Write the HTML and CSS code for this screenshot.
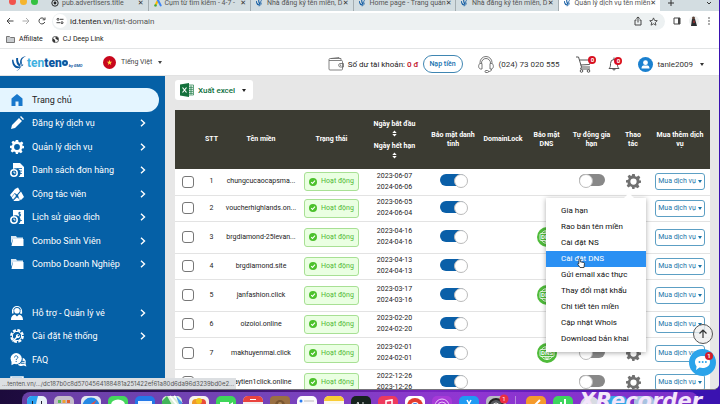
FILE: index.html
```html
<!DOCTYPE html>
<html lang="vi">
<head>
<meta charset="utf-8">
<meta name="viewport" content="width=device-width, initial-scale=1">
<title>Quản lý dịch vụ tên miền</title>
<link rel="stylesheet" href="styles.css">
</head>
<body>
<svg class="sprite" aria-hidden="true">
  <symbol id="swirl" viewBox="0 0 16 16"><path d="M0 4c0 6 3 9 6 9 2 0 3-1 3-2C5 12 2 9 1.500 4zM4.500 2C4 7 6 11 9 11c2 0 3-1 3-2C9 10 6 7 6.500 2zM9 9c-1-4 0-8 6-9-4 2-5 4-4.500 7 0 4-2 8-6 9 3-2 4.500-4 4.500-7z"/></symbol>
  <symbol id="gear" viewBox="0 0 24 24"><path fill-rule="evenodd" d="M10 0h4l.7 3.400 2.500 1 2.900-1.900 2.800 2.800-1.900 2.900 1 2.500L24 10v4l-3.400.7-1 2.500 1.900 2.900-2.800 2.800-2.900-1.900-2.500 1L14 24h-4l-.7-3.400-2.500-1-2.900 1.900-2.800-2.800 1.900-2.900-1-2.500L0 14v-4l3.400-.7 1-2.500-1.900-2.900 2.800-2.800 2.900 1.900 1.100-.7zM12 7a5 5 0 1 0 0 10 5 5 0 0 0 0-10z"/></symbol>
  <symbol id="chev" viewBox="0 0 8 8"><path d="M2 .8 5.500 4 2 7.200" fill="none" stroke="currentColor" stroke-width="1.400"/></symbol>
  <symbol id="folder" viewBox="0 0 14 14"><path d="M1 2h5l1 1.500h6V5H3L1 10z" opacity=".85"/><path d="M3 5h10.500v7H1.500z"/></symbol>
  <symbol id="doc" viewBox="0 0 14 14"><path d="M3 0h7l4 4v10H8.500A4.500 4.500 0 0 0 3 6z"/><path d="M7 5.500h5M8.500 8H12M9 10.500h3" stroke="#0560a6" stroke-width=".8"/><circle cx="4" cy="10" r="3.200" fill="none" stroke="currentColor" stroke-width="1.500"/><path d="M4 8.500V10h1.500" fill="none" stroke="currentColor"/></symbol>
  <symbol id="bill" viewBox="0 0 14 14"><path d="M3 0h11v14H8.500A4.500 4.500 0 0 0 3 6z"/><path d="M10.500 2.500H8.800v1.700h1.700v1.700H8.800M9.600 1.800v5M8.500 10.500H12" fill="none" stroke="#0560a6" stroke-width=".8"/><circle cx="4" cy="10" r="3.200" fill="none" stroke="currentColor" stroke-width="1.500"/><path d="M4 8.500V10h1.500" fill="none" stroke="currentColor"/></symbol>
  <symbol id="tick" viewBox="0 0 10 10"><circle cx="5" cy="5" r="5" fill="#4cc12c"/><path d="M2.700 5.100 4.400 6.800 7.500 3.400" fill="none" stroke="#fff" stroke-width="1.300"/></symbol>
  <symbol id="dns" viewBox="0 0 20 20"><circle cx="10" cy="10" r="10" fill="#4fbb3a"/><g fill="none" stroke="#fff" stroke-width=".8"><path d="M4.500 6.500a6.500 6.500 0 0 1 11 0M4.500 13.500a6.500 6.500 0 0 0 11 0M10 3.500v3M10 13.500v3M8 6.500C8.300 5 9 4 10 3.500 11 4 11.700 5 12 6.500M8 13.500c.3 1.500 1 2.500 2 3 1-.5 1.700-1.500 2-3"/><rect x="3" y="6.500" width="14" height="7" rx="1"/></g><text x="10" y="12.200" text-anchor="middle" font-family="Roboto, sans-serif" font-weight="700" font-size="6" fill="#fff">DNS</text></symbol>
</svg>

<div class="window">
  <header class="tabstrip">
    <div class="lights"><i class="red"></i><i class="amber"></i><i class="green"></i></div>
    <div class="tabs">
      <div class="tab"><svg class="fav" viewBox="0 0 10 10"><circle cx="5" cy="5" r="4" fill="none" stroke="#222" stroke-width="1.200"/><circle cx="5" cy="5" r="1.800" fill="#222"/></svg><span>pub.advertisers.title</span><b>✕</b></div>
      <div class="tab"><svg class="fav" viewBox="0 0 10 10"><path d="M5 1.500 1.800 8" stroke="#fbbc04" stroke-width="2.600" stroke-linecap="round"/><path d="M5 1.500 8.300 8" stroke="#4285f4" stroke-width="2.600" stroke-linecap="round"/><circle cx="1.900" cy="8" r="1.500" fill="#34a853"/></svg><span>Cụm từ tìm kiếm - 4-7 -</span><b>✕</b></div>
      <div class="tab"><svg class="fav brand"><use href="#swirl"/></svg><span>Nhà đăng ký tên miền, D</span><b>✕</b></div>
      <div class="tab"><svg class="fav brand"><use href="#swirl"/></svg><span>Home page - Trang quản</span><b>✕</b></div>
      <div class="tab"><svg class="fav brand"><use href="#swirl"/></svg><span>Nhà đăng ký tên miền, D</span><b>✕</b></div>
      <div class="tab current"><svg class="fav brand"><use href="#swirl"/></svg><span>Quản lý dịch vụ tên miền</span><b>✕</b></div>
    </div>
    <div class="tabtools">
      <svg width="8" height="8" viewBox="0 0 8 8"><path d="M4 1v6M1 4h6" stroke="#333"/></svg>
      <svg width="8" height="8" viewBox="0 0 8 8"><path d="m2 3 2 2 2-2" fill="none" stroke="#333"/></svg>
    </div>
  </header>

  <div class="toolbar">
    <svg width="8" height="8" viewBox="0 0 8 8" fill="none" stroke="#444"><path d="M7.500 4H1M4 1 1 4l3 3"/></svg>
    <svg width="8" height="8" viewBox="0 0 8 8" fill="none" stroke="#aaa"><path d="M.5 4H7M4 1l3 3-3 3"/></svg>
    <svg width="8" height="8" viewBox="0 0 8 8" fill="none" stroke="#444"><path d="M6.800 5A3 3 0 1 1 6.300 2M7 .5v2.300H4.700"/></svg>
    <div class="address">
      <span class="site"><svg width="8" height="8" viewBox="0 0 8 8" fill="none" stroke="#444"><circle cx="2" cy="2.300" r="1"/><path d="M4 2.300h3.500M.5 5.700H4"/><circle cx="6" cy="5.700" r="1"/></svg></span>
      <span class="url">id.tenten.vn<em>/list-domain</em></span>
      <svg width="8" height="10" viewBox="0 0 8 10" fill="none" stroke="#444"><path d="M2.500 4H1v5h6V4H5.500M4 6.500V1M2.300 2.500 4 1l1.700 1.500"/></svg>
      <svg width="9" height="9" viewBox="0 0 10 10" fill="none" stroke="#444"><path d="m5 1 1.200 2.800 3 .3L7 6.100l.7 3L5 7.500 2.300 9.100l.7-3L.8 4.100l3-.3z"/></svg>
    </div>
    <svg width="8" height="8" viewBox="0 0 8 8"><path d="M1 1h6v6H1z" fill="none" stroke="#444"/><path d="M5 1h2v6H5z" fill="#444"/></svg>
    <svg width="10" height="10" viewBox="0 0 10 10"><circle cx="5" cy="5" r="5" fill="#eef0f0"/><path d="M3 3h3l2 7H2z" fill="#292b2e"/><circle cx="4.500" cy="2" r="1.500" fill="#5c4238"/><path d="M4.500 4.500h1V7h-1z" fill="#d33"/></svg>
    <svg width="4" height="8" viewBox="0 0 4 8" fill="#444"><circle cx="2" cy="1" r=".8"/><circle cx="2" cy="4" r=".8"/><circle cx="2" cy="7" r=".8"/></svg>
  </div>

  <nav class="bookmarks">
    <a href="#"><svg width="9" height="7" viewBox="0 0 9 7"><path d="M.5.5h3l1 1h4v5h-8z" fill="#c9cccf" stroke="#777"/></svg>Affiliate</a>
    <a href="#"><svg width="7" height="7" viewBox="0 0 8 8"><circle cx="4" cy="4" r="3.600" fill="#fff" stroke="#333" stroke-width=".8"/><path d="M1 2.500 3 4l1 2-1 1.500C1 7 0 5 1 2.500zM4 .5 7 2l.5 3-2-1-1.500-1z" fill="#333"/></svg>CJ Deep Link</a>
  </nav>

  <div class="sitebar">
    <a class="logo" href="#" aria-label="tenten"><svg class="brand" width="15" height="15"><use href="#swirl"/></svg><span class="word">ten<b>ten</b></span><i class="vn"></i><small>by GMO</small></a>
    <div class="lang"><svg width="13" height="13" viewBox="0 0 13 13"><circle cx="6.500" cy="6.500" r="6.500" fill="#c8071c"/><path d="m6.500 3.800.7 1.900h2L7.600 6.900l.6 2-1.700-1.200-1.700 1.200.6-2-1.600-1.200h2z" fill="#ffde45"/></svg><span>Tiếng Việt</span><i class="caret"></i></div>
    <div class="balance">
      <svg width="16" height="14" viewBox="0 0 16 14" fill="none" stroke="#666" stroke-width=".8"><path d="M1 3.500h12.500a1 1 0 0 1 1 1V12a1 1 0 0 1-1 1H2a1 1 0 0 1-1-1V2.500C1 1.500 2 1.500 2 1.500h11v2M3 1.500l8-1 1 1M15.500 6.500H12a1.800 1.800 0 0 0 0 3.500h3.500z"/><circle cx="12.500" cy="8.200" r=".4"/></svg>
      <span>Số dư tài khoản: <strong>0 đ</strong></span>
      <button type="button" class="topup">Nạp tiền</button>
    </div>
    <div class="phone">
      <svg width="16" height="17" viewBox="0 0 16 17" fill="none" stroke="#666" stroke-width=".9"><path d="M2 8V6.500a6 6 0 0 1 12 0V8M3.500 7a4.500 4.500 0 0 1 9 0M2.500 7.500C0 8 0 12.500 2.500 13h1.500V7.500zM13.500 7.500C16 8 16 12.500 13.500 13H12V7.500zM13.500 13c0 2-1 2.500-3 2.500"/><rect x="7" y="14.500" width="3.500" height="2" rx="1"/></svg>
      <span>(024) 73 020 555</span>
    </div>
    <a class="badged" href="#" aria-label="Giỏ hàng"><svg width="16" height="17" viewBox="0 0 16 17" fill="none" stroke="#555"><path d="M0 1h2.500l3 10H14M3.500 4H15l-1.500 4.500-9 .5M5.500 11l-1 2H14"/><circle cx="5.500" cy="15" r="1.300"/><circle cx="12.500" cy="15" r="1.300"/></svg><b>0</b></a>
    <a class="badged bell" href="#" aria-label="Thông báo"><svg width="12" height="14" viewBox="0 0 12 14" fill="none" stroke="#555"><path d="M1 11.500h10C9.500 10 9.500 9 9.500 6.500a3.500 4 0 0 0-7 0C2.500 9 2.500 10 1 11.500zM6 2.500V.5M4.700 11.700a1.300 1.300 0 0 0 2.600 0"/></svg><b>0</b></a>
    <div class="user"><svg width="15" height="15" viewBox="0 0 15 15"><circle cx="7.500" cy="7.500" r="7.500" fill="#1a80cf"/><circle cx="7.500" cy="5.700" r="2.400" fill="#fff"/><path d="M3.500 11.500c0-3.500 2-3 4-3s4-.5 4 3z" fill="#fff"/></svg><span>tanle2009</span><i class="caret"></i></div>
  </div>

  <div class="body">
    <nav class="side">
      <ul class="main-links">
        <li class="on"><a href="#"><svg viewBox="0 0 14 14" fill="#1878cc"><path d="M7 1 1.500 5.500V13h4V8.500h3V13h4V5.500z"/></svg>Trang chủ</a></li>
        <li><a href="#"><svg viewBox="0 0 14 14"><path d="m2 9 7-7 3 3-7 7-4 1zM10 1l1-1 3 3-1 1z"/></svg>Đăng ký dịch vụ<svg class="go"><use href="#chev"/></svg></a></li>
        <li><a href="#"><svg><use href="#gear"/></svg>Quản lý dịch vụ<svg class="go"><use href="#chev"/></svg></a></li>
        <li><a href="#"><svg><use href="#doc"/></svg>Danh sách đơn hàng<svg class="go"><use href="#chev"/></svg></a></li>
        <li><a href="#"><svg viewBox="0 0 14 14"><path d="m0 8 5-6 3-1.500L10 4 7 7.500 4.500 6 6 9l-3 3.500z"/><path d="m8 8 3-3.500L14 10l-3 3-2-1.500zM3.500 13l3-3 4 3-2 1H4z"/><path d="m1 11 4-5M4 13l4-4" stroke="#0560a6" stroke-width=".6"/></svg>Cộng tác viên<svg class="go"><use href="#chev"/></svg></a></li>
        <li><a href="#"><svg><use href="#bill"/></svg>Lịch sử giao dịch<svg class="go"><use href="#chev"/></svg></a></li>
        <li><a href="#"><svg><use href="#folder"/></svg>Combo Sinh Viên<svg class="go"><use href="#chev"/></svg></a></li>
        <li><a href="#"><svg><use href="#folder"/></svg>Combo Doanh Nghiệp<svg class="go"><use href="#chev"/></svg></a></li>
      </ul>
      <ul class="help-links">
        <li><a href="#"><svg viewBox="0 0 14 14"><circle cx="7" cy="4.800" r="2.800"/><path d="M2.500 5a4.500 4.500 0 0 1 9 0v2H10" fill="none" stroke="currentColor" stroke-width="1.200"/><path d="M1 14c0-4 2-5 4-5.500l2 2 2-2c2 .5 4 1.500 4 5.500zM2 4h1.500v3.500H2zM10.500 4H12v3.500h-1.500z"/></svg>Hỗ trợ - Quản lý vé<svg class="go"><use href="#chev"/></svg></a></li>
        <li><a href="#"><svg viewBox="0 0 14 14"><circle cx="7" cy="7" r="5.800" fill="none" stroke="currentColor" stroke-width="2.200" stroke-dasharray="3 1.500"/><circle cx="7" cy="7" r="4.600" fill="none" stroke="currentColor"/><path d="m2 12 4-4a2.400 2.400 0 0 1 3-3L7.500 6.500l1 1L10 6a2.400 2.400 0 0 1-3 3l-4 4z"/></svg>Cài đặt hệ thống<svg class="go"><use href="#chev"/></svg></a></li>
        <li><a href="#"><svg class="faq" viewBox="0 0 17 15"><circle cx="6" cy="6" r="6"/><path d="M1 9v4l4-2zM13 5c3 1 4 4 3 6.500l1 3-3-1c-3 1-5.500 0-6.500-1.500 4 0 6-3.500 5.500-7z"/><path d="M4.200 4.800c0-2.500 3.600-2.300 3.600 0C7.800 6 6 6 6 7.500M6 8.500v1.200M11 11h4M12 9h3" fill="none" stroke="#0560a6"/></svg>FAQ</a></li>
        <li><a href="#"><svg viewBox="0 0 14 14"><path d="M1 1h12v10H1z" fill="none" stroke="currentColor" stroke-width="1.500"/></svg></a></li>
      </ul>
    </nav>

    <main class="content">
      <button type="button" class="export"><svg width="14" height="14" viewBox="0 0 14 14"><path d="M8 2h5.500v10H8z" fill="#fff" stroke="#1d7b45" stroke-width=".7"/><path d="M9 4.300h4M9 6.300h4M9 8.300h4M9 10.300h4M11 2.500v9" stroke="#1d7b45" stroke-width=".8"/><path d="m0 1.500 9-1.500v14l-9-1.500z" fill="#14713c"/><path d="m2.500 4.500 4 5M6.500 4.500l-4 5" stroke="#fff" stroke-width="1.200"/></svg>Xuất excel<i class="caret"></i></button>

      <table class="domains">
        <colgroup><col class="w-check"><col class="w-stt"><col class="w-name"><col class="w-state"><col class="w-dates"><col class="w-id"><col class="w-lock"><col class="w-dns"><col class="w-renew"><col class="w-act"><col class="w-buy"></colgroup>
        <thead><tr><th></th><th>STT</th><th>Tên miền</th><th>Trạng thái</th><th class="sort"><span>Ngày bắt đầu</span><svg width="5" height="7" viewBox="0 0 5 7"><path d="M.3 3 2.500.5 4.700 3zM.3 4 2.500 6.500 4.700 4z"/></svg><span>Ngày hết hạn</span><svg width="5" height="7" viewBox="0 0 5 7"><path d="M.3 3 2.500.5 4.700 3zM.3 4 2.500 6.500 4.700 4z"/></svg></th><th>Bảo mật danh tính</th><th>DomainLock</th><th>Bảo mật DNS</th><th>Tự động gia hạn</th><th>Thao tác</th><th>Mua thêm dịch vụ</th></tr></thead>
        <tbody>
          <tr><td><input type="checkbox" class="pick" aria-label="Chọn 1"></td><td>1</td><td>chungcucaocapsma...</td><td><span class="state"><svg><use href="#tick"/></svg>Hoạt động</span></td><td>2023-06-07<br>2024-06-06</td><td><input type="checkbox" class="switch" aria-label="Bảo mật 1" checked></td><td></td><td></td><td><input type="checkbox" class="switch" aria-label="Gia hạn 1"></td><td class="act"><button type="button" class="cog" aria-label="Thao tác 1"><svg><use href="#gear"/></svg></button>
            <ul class="menu"><li><a href="#">Gia hạn</a></li><li><a href="#">Rao bán tên miền</a></li><li><a href="#">Cài đặt NS</a></li><li class="hot"><a href="#">Cài đặt DNS</a><svg class="hand" width="8" height="10" viewBox="0 0 8 10"><path d="M2 1c.6-.6 1.300-.2 1.300.5v2.300l3 .6c1 .2 1.200.6 1.100 1.500L7 9.500H3L.8 6.300C.5 5.700 1.200 5.200 1.800 5.700z" fill="#fff" stroke="#222" stroke-width=".8"/></svg></li><li><a href="#">Gửi email xác thực</a></li><li><a href="#">Thay đổi mật khẩu</a></li><li><a href="#">Chi tiết tên miền</a></li><li><a href="#">Cập nhật Whois</a></li><li><a href="#">Download bản khai</a></li></ul></td><td><button type="button" class="buy">Mua dịch vụ<i class="caret"></i></button></td></tr>
          <tr><td><input type="checkbox" class="pick" aria-label="Chọn 2"></td><td>2</td><td>voucherhighlands.on...</td><td><span class="state"><svg><use href="#tick"/></svg>Hoạt động</span></td><td>2023-06-05<br>2024-06-04</td><td><input type="checkbox" class="switch" aria-label="Bảo mật 2" checked></td><td></td><td></td><td><input type="checkbox" class="switch" aria-label="Gia hạn 2"></td><td><button type="button" class="cog" aria-label="Thao tác 2"><svg><use href="#gear"/></svg></button></td><td><button type="button" class="buy">Mua dịch vụ<i class="caret"></i></button></td></tr>
          <tr class="tall"><td><input type="checkbox" class="pick" aria-label="Chọn 3"></td><td>3</td><td>brgdiamond-25levan...</td><td><span class="state"><svg><use href="#tick"/></svg>Hoạt động</span></td><td>2023-04-16<br>2024-04-16</td><td><input type="checkbox" class="switch" aria-label="Bảo mật 3" checked></td><td></td><td><svg class="dns"><use href="#dns"/></svg></td><td><input type="checkbox" class="switch" aria-label="Gia hạn 3"></td><td><button type="button" class="cog" aria-label="Thao tác 3"><svg><use href="#gear"/></svg></button></td><td><button type="button" class="buy">Mua dịch vụ<i class="caret"></i></button></td></tr>
          <tr><td><input type="checkbox" class="pick" aria-label="Chọn 4"></td><td>4</td><td>brgdiamond.site</td><td><span class="state"><svg><use href="#tick"/></svg>Hoạt động</span></td><td>2023-04-13<br>2024-04-13</td><td><input type="checkbox" class="switch" aria-label="Bảo mật 4" checked></td><td></td><td></td><td><input type="checkbox" class="switch" aria-label="Gia hạn 4"></td><td><button type="button" class="cog" aria-label="Thao tác 4"><svg><use href="#gear"/></svg></button></td><td><button type="button" class="buy">Mua dịch vụ<i class="caret"></i></button></td></tr>
          <tr class="tall"><td><input type="checkbox" class="pick" aria-label="Chọn 5"></td><td>5</td><td>janfashion.click</td><td><span class="state"><svg><use href="#tick"/></svg>Hoạt động</span></td><td>2023-03-17<br>2024-03-16</td><td><input type="checkbox" class="switch" aria-label="Bảo mật 5" checked></td><td></td><td><svg class="dns"><use href="#dns"/></svg></td><td><input type="checkbox" class="switch" aria-label="Gia hạn 5"></td><td><button type="button" class="cog" aria-label="Thao tác 5"><svg><use href="#gear"/></svg></button></td><td><button type="button" class="buy">Mua dịch vụ<i class="caret"></i></button></td></tr>
          <tr><td><input type="checkbox" class="pick" aria-label="Chọn 6"></td><td>6</td><td>oizoioi.online</td><td><span class="state"><svg><use href="#tick"/></svg>Hoạt động</span></td><td>2023-02-20<br>2024-02-20</td><td><input type="checkbox" class="switch" aria-label="Bảo mật 6" checked></td><td></td><td></td><td><input type="checkbox" class="switch" aria-label="Gia hạn 6"></td><td><button type="button" class="cog" aria-label="Thao tác 6"><svg><use href="#gear"/></svg></button></td><td><button type="button" class="buy">Mua dịch vụ<i class="caret"></i></button></td></tr>
          <tr class="tall"><td><input type="checkbox" class="pick" aria-label="Chọn 7"></td><td>7</td><td>makhuyenmai.click</td><td><span class="state"><svg><use href="#tick"/></svg>Hoạt động</span></td><td>2023-02-01<br>2024-02-01</td><td><input type="checkbox" class="switch" aria-label="Bảo mật 7" checked></td><td></td><td><svg class="dns"><use href="#dns"/></svg></td><td><input type="checkbox" class="switch" aria-label="Gia hạn 7"></td><td><button type="button" class="cog" aria-label="Thao tác 7"><svg><use href="#gear"/></svg></button></td><td><button type="button" class="buy">Mua dịch vụ<i class="caret"></i></button></td></tr>
          <tr><td><input type="checkbox" class="pick" aria-label="Chọn 8"></td><td></td><td>vaytien1click.online</td><td><span class="state"><svg><use href="#tick"/></svg>Hoạt động</span></td><td>2022-12-26<br>2023-12-26</td><td><input type="checkbox" class="switch" aria-label="Bảo mật 8" checked></td><td></td><td></td><td><input type="checkbox" class="switch" aria-label="Gia hạn 8"></td><td><button type="button" class="cog" aria-label="Thao tác 8"><svg><use href="#gear"/></svg></button></td><td><button type="button" class="buy">Mua dịch vụ<i class="caret"></i></button></td></tr>
        </tbody>
      </table>
    </main>
  </div>

  <div class="floaters">
    <button type="button" class="up" aria-label="Lên đầu trang"><svg width="10" height="10" viewBox="0 0 10 10" fill="none" stroke="#333" stroke-width="1.200"><path d="M5 9V1M1.500 4.500 5 1l3.500 3.500"/></svg></button>
    <button type="button" class="chat" aria-label="Chat"><svg width="17" height="16" viewBox="0 0 17 16"><path d="M8.500 1C13 1 16 3.500 16 7s-3 6-7.500 6c-1 0-2-.1-3-.4L2 15l.6-3.600C1.500 10 1 8.500 1 7c0-3.500 3-6 7.500-6z" fill="#fff"/><g fill="#2aa3ea"><circle cx="5.500" cy="7" r="1"/><circle cx="8.700" cy="7" r="1"/><circle cx="11.900" cy="7" r="1"/></g></svg><b>1</b></button>
  </div>
  <div class="status">...tenten.vn/.../dc187b0c8d5704564188481a251422ef61a80d6da96d3239bd0e2...</div>
</div>

<footer class="desktop">
  <div class="dock">
    <svg viewBox="0 0 20 20"><rect width="20" height="20" rx="5" fill="#e9f1f8"/><path d="M5 0h6c-1 4-2 7-2 10H0V5a5 5 0 0 1 5-5z" fill="#2aa0f0"/><path d="M5.500 5v3M14.500 5v3" stroke="#223"/></svg>
    <svg viewBox="0 0 20 20"><rect width="20" height="20" rx="5" fill="#c4bccb"/><path d="M4 4h3v3H4z" fill="#58b957"/><path d="M8.500 4h3v3h-3z" fill="#f0a030"/><path d="M13 4h3v3h-3z" fill="#e06030"/></svg>
    <svg viewBox="0 0 20 20"><rect width="20" height="20" rx="5" fill="#e3e8ef"/><circle cx="10" cy="10" r="8.500" fill="#2588e4"/><path d="m15.500 4-4 7-3-2z" fill="#e94b40"/></svg>
    <svg viewBox="0 0 20 20"><rect width="20" height="20" rx="5" fill="#45d85c"/><ellipse cx="10" cy="9" rx="7" ry="5.500" fill="#fff"/></svg>
    <svg viewBox="0 0 20 20"><rect width="20" height="20" rx="5" fill="#2479e8"/><path d="M3 5h14v10H3z" fill="#f3f8ff"/></svg>
    <svg viewBox="0 0 20 20"><rect width="20" height="20" rx="5" fill="#d9eed5"/><path d="M0 5 5 0l5 9v11H0z" fill="#42b55a"/><path d="m8 0 7 9M12 0l8 7" stroke="#fff" stroke-width="2"/><path d="m14 0 6 6v10z" fill="#4a9ee9"/></svg>
    <svg viewBox="0 0 20 20"><rect width="20" height="20" rx="5" fill="#f6f3ee"/><circle cx="7" cy="7" r="4" fill="#f09a28"/><circle cx="13" cy="7" r="4" fill="#e84c3c"/><circle cx="10" cy="5" r="3" fill="#f2c41e"/></svg>
    <svg viewBox="0 0 20 20"><rect width="20" height="20" rx="5" fill="#3fd65a"/><path d="M4 6h9v8H4zM14 8l3-2v8l-3-2z" fill="#fff"/></svg>
    <svg viewBox="0 0 20 20"><rect width="20" height="20" rx="5" fill="#f2eeee"/><path d="M0 6V5a5 5 0 0 1 5-5h10a5 5 0 0 1 5 5v1z" fill="#e9433e"/><path d="M7 3.500h6" stroke="#fff"/></svg>
    <svg viewBox="0 0 20 20"><rect width="20" height="20" rx="4" fill="#9a7042"/><circle cx="10" cy="9" r="5" fill="#7a5630"/><circle cx="10" cy="8" r="2" fill="#b08a58"/></svg>
    <svg viewBox="0 0 20 20"><rect width="20" height="20" rx="5" fill="#fbfbfd"/><circle cx="4" cy="5" r="1.500" fill="#2a7df0"/><path d="M7 5h10" stroke="#bbb"/></svg>
    <svg viewBox="0 0 20 20"><rect width="20" height="20" rx="5" fill="#fbf8ea"/><path d="M0 5a5 5 0 0 1 5-5h10a5 5 0 0 1 5 5z" fill="#f9cc35"/></svg>
    <svg viewBox="0 0 20 20"><rect width="20" height="20" rx="5" fill="#17241f"/><path d="m6 8 1-2 1 3M12 6v3" stroke="#ddd" fill="none"/></svg>
    <svg viewBox="0 0 20 20"><rect width="20" height="20" rx="5" fill="#ee3a5d"/><path d="M8 12V5l6-1v7" stroke="#fff" fill="none" stroke-width="1.500"/></svg>
    <svg viewBox="0 0 20 20"><rect width="20" height="20" rx="5" fill="#fff"/><circle cx="10" cy="10" r="8" fill="#e23c30"/><circle cx="10" cy="10" r="4" fill="#fff"/><circle cx="10" cy="10" r="3" fill="#3a7de8"/></svg>
    <svg viewBox="0 0 20 20"><rect width="20" height="20" rx="5" fill="#a83ad8"/><g fill="none" stroke="#ecc9fa"><circle cx="10" cy="10" r="7"/><circle cx="10" cy="10" r="4"/></g></svg>
    <svg viewBox="0 0 20 20"><rect width="20" height="20" rx="5" fill="#1f9bf3"/><path d="m8 4 5 9M12 4l-5 9" stroke="#fff" stroke-width="1.500"/></svg>
    <svg class="prefs" viewBox="0 0 20 20"><rect width="20" height="20" rx="5" fill="#b9bbc0"/><circle cx="10" cy="10" r="7" fill="#55575c" stroke="#222" stroke-width="2"/><circle cx="10" cy="10" r="3" fill="none" stroke="#ddd"/><circle cx="18" cy="3" r="4.500" fill="#ec2f42"/><text x="18" y="5.200" text-anchor="middle" font-family="Roboto, sans-serif" font-size="6" fill="#fff">1</text></svg>
    <hr>
    <svg viewBox="0 0 20 20"><rect width="20" height="20" rx="5" fill="#f59a2c"/><path d="m7 11 7-7" stroke="#fff" stroke-width="2"/></svg>
    <svg viewBox="0 0 20 20"><rect width="20" height="20" rx="5" fill="#3ed65e"/><path d="M8 12V6M12 12V3" stroke="#fff" stroke-width="2"/></svg>
    <svg viewBox="0 0 20 20"><circle cx="10" cy="10" r="10" fill="#d8dbe2"/></svg>
    <svg viewBox="0 0 20 20"><rect width="20" height="20" rx="5" fill="#36a6e4"/></svg>
    <svg viewBox="0 0 20 20"><rect width="20" height="20" rx="5" fill="#a9c3e0"/></svg>
  </div>
  <span class="mark">XRecorder</span>
</footer>
</body>
</html>
```
FILE: styles.css
```css
* { box-sizing: border-box; }
body {
  margin: 0;
  height: 100vh;
  display: flex;
  flex-direction: column;
  overflow: hidden;
  position: relative;
  background: linear-gradient(90deg, #1c0b3c, #32125e 30%, #7c24c4 60%, #3a12b0 95%);
  font-family: Roboto, "Noto Sans", sans-serif;
  font-size: 8px;
  color: #222;
}
a { color: inherit; text-decoration: none; }
button { font: inherit; padding: 0; cursor: pointer; }
ul { list-style: none; margin: 0; padding: 0; }
svg { display: block; flex: none; }
.sprite { position: absolute; width: 0; height: 0; }
.brand { fill: #0b57a0; }
.caret { border: 2px solid transparent; border-top: 3px solid currentColor; border-bottom: 0; }

.window {
  flex: 1;
  min-height: 0;
  margin-right: 1px;
  display: flex;
  flex-direction: column;
  position: relative;
  overflow: hidden;
  background: #fff;
  border-bottom: 1px solid #77747c;
  border-radius: 0 0 6px 0;
}

.tabstrip { display: flex; align-items: flex-end; height: 11px; overflow: hidden; background: #d3dde1; }
.lights { display: flex; align-items: center; gap: 4px; width: 46px; height: 17px; padding: 0 0 3px 9px; }
.lights i { width: 7px; height: 7px; border-radius: 50%; }
.red { background: #f2544d; }
.amber { background: #f5b52e; }
.green { background: #35c141; }
.tabs { flex: 1; display: flex; min-width: 0; }
.tab { flex: 1 1 0; min-width: 0; display: flex; align-items: center; height: 17px; padding: 0 4px 0 5px; color: #555; border-right: 1px solid #a5aeb2; }
.tab.current { background: #fff; border-radius: 4px 4px 0 0; border: 0; }
.tab span { flex: 1; white-space: nowrap; margin-left: 3px; font-size: 7px; }
.tab b { font: 7px "DejaVu Sans", sans-serif; color: #333; }
.fav { width: 8px; height: 8px; }
.tabtools { display: flex; align-items: center; justify-content: space-between; width: 59px; height: 17px; padding: 0 6px 0 7px; }

.toolbar { display: flex; align-items: center; gap: 8px; height: 20px; padding: 0 8px 0 6px; }
.toolbar > svg + .address { margin-left: -2px; }
.address { flex: 1; display: flex; align-items: center; gap: 7px; height: 17px; padding-right: 7px; border-radius: 9px; background: #edf1f2; }
.site { display: grid; place-items: center; width: 14px; height: 14px; margin: 0 -5px 0 1px; border-radius: 50%; background: #fff; }
.url { flex: 1; padding-left: 1px; font-size: 8px; }
.url em { font-style: normal; color: #555; }
.bookmarks { display: flex; align-items: center; gap: 9px; height: 18px; padding: 0 6px 1px; border-bottom: 1px solid #e3e5e6; font-size: 7px; }
.bookmarks a { display: flex; align-items: center; gap: 4px; }

.sitebar { display: flex; align-items: center; height: 27px; padding: 4px 15px 0 12px; border-bottom: 1px solid #e2e2e2; }
.logo { display: flex; align-items: center; height: 20px; width: 91px; padding-bottom: 2px; }
.word { color: #41b1e1; font-weight: 700; font-size: 12px; line-height: 12px; }
.word b { color: #0b57a0; }
.vn { flex: none; width: 6px; height: 6px; border: 2px solid #0b57a0; border-radius: 50%; background: #9fd0ef; }
.logo small { margin: 4px 0 0 1px; color: #0b57a0; font-size: 4px; font-weight: 700; font-style: italic; white-space: nowrap; }
.lang { display: flex; align-items: center; height: 20px; padding-bottom: 4px; color: #444; white-space: nowrap; }
.lang span { margin: 0 6px 0 5px; font-size: 7px; }
.balance { display: flex; align-items: center; gap: 4px; margin-left: auto; font-size: 8px; white-space: nowrap; }
.balance strong { color: #c00d1e; font-weight: 500; }
.topup { width: 40px; height: 18px; border: 1px solid #3f86b2; border-radius: 9px; background: #fff; color: #1470ae; font-size: 7px; font-weight: 500; }
.phone { display: flex; align-items: center; gap: 5px; margin-left: 15px; color: #333; white-space: nowrap; }
.badged { position: relative; margin-left: 17px; }
.badged b { position: absolute; left: 12px; top: 0; width: 8px; height: 8px; border-radius: 50%; background: #d80f20; color: #fff; font-size: 6px; line-height: 8px; text-align: center; }
.bell { margin-left: 16px; }
.bell b { left: 6px; }
.user { display: flex; align-items: center; margin-left: 18px; color: #333; }
.user span { margin: 0 7px 0 4px; }

.body { flex: 1; min-height: 0; display: flex; background: #e7e7e7; overflow: hidden; }
.side { flex: none; width: 165px; padding-top: 12px; background: #0560a6; color: #fff; font-size: 9px; }
.main-links, .help-links { display: grid; grid-auto-rows: 1fr; }
.main-links { height: 188px; }
.help-links { height: 94px; margin-top: 25px; }
.side li { display: flex; }
.side a { flex: 1; display: flex; align-items: center; padding: 0 18px 0 10px; gap: 8px; fill: #fff; white-space: nowrap; }
.side svg { width: 14px; height: 14px; overflow: visible; }
.side .go { width: 8px; height: 8px; margin-left: auto; }
.side .faq { width: 17px; margin-right: -3px; }
.side .on { margin-right: 6px; border-radius: 0 12px 12px 0; background: #e4f5ff; color: #222; }

.content { flex: 1; min-width: 0; padding: 4px 9px 0 10px; }
.export { display: flex; align-items: center; gap: 4px; height: 20px; padding: 0 7px 0 5px; border: 0; border-radius: 3px; background: #fff; color: #0c6e3c; font-size: 8px; font-weight: 500; }
.export .caret { margin-left: 3px; color: #222; }
.domains { width: 100%; margin-top: 10px; border-collapse: collapse; table-layout: fixed; background: #fff; font-size: 7px; color: #222; text-align: center; }
.w-check { width: 26px; }
.w-stt { width: 21px; }
.w-name { width: 78px; }
.w-state { width: 63px; }
.w-dates { width: 63px; }
.w-id { width: 54px; }
.w-lock { width: 46px; }
.w-dns { width: 41px; }
.w-renew { width: 49px; }
.w-act { width: 34px; }
th { height: 59px; padding: 0 5px; background: #3b3b32; color: #fff; font-size: 7px; font-weight: 700; line-height: 9px; }
th:nth-child(2), th:nth-child(7) { padding: 0; }
.sort span { display: block; }
.sort svg { margin: 1px auto 5px; fill: #fff; }
.sort svg:last-child { margin-bottom: 0; }
td { height: 26px; padding: 0; border-bottom: 1px solid #e3e3e3; line-height: 11px; white-space: nowrap; }
.tall td { height: 32px; }
.pick { appearance: none; display: block; width: 12px; height: 12px; margin: 0 auto; border: 1px solid #777; border-radius: 3px; background: #fff; }
.state { display: flex; align-items: center; justify-content: center; gap: 4px; width: 55px; height: 19px; margin: 0 auto; border: 1px solid #a8e094; border-radius: 3px; background: #eaffe2; color: #4fb834; font-size: 7px; }
.state svg { width: 8px; height: 8px; }
.switch { appearance: none; display: block; width: 26px; height: 12px; margin: 0 auto 3px; border-radius: 6px; background: #888; }
.switch::before { content: ""; display: block; width: 12px; height: 12px; border: 1px solid #bbb; border-radius: 50%; background: #fff; }
.switch:checked { background: #0a5fa8; }
.switch:checked::before { margin-left: 14px; }
.dns { width: 20px; height: 20px; margin: 0 auto; }
.act { position: relative; }
.cog { display: block; margin: 0 auto; border: 0; background: none; fill: #707070; }
.cog svg { width: 15px; height: 15px; }
.buy { display: flex; align-items: center; justify-content: center; gap: 2px; width: 50px; height: 17px; margin: 0 auto; border: 1px solid #5c9fc4; border-radius: 3px; background: #fff; color: #1a74a8; font-size: 7px; }

.menu { position: absolute; z-index: 2; top: 29px; right: 4px; width: 100px; padding: 5px 0; background: #fff; box-shadow: 0 1px 5px #0005; color: #111; font-size: 8px; text-align: left; }
.menu::before { content: ""; position: absolute; top: -5px; left: 77px; border: 6px solid transparent; border-top: 0; border-bottom-color: #fff; }
.menu li { position: relative; height: 16px; padding-left: 15px; line-height: 16px; }
.menu .hot { background: #2a90f3; color: #fff; }
.hand { position: absolute; left: 31px; top: 7px; }

.floaters { position: absolute; right: 3px; bottom: 13px; display: flex; flex-direction: column; align-items: center; gap: 5px; }
.floaters button { display: grid; place-items: center; border-radius: 50%; }
.up { width: 20px; height: 20px; border: 1px solid #555; background: #eeec; }
.chat { position: relative; width: 27px; height: 27px; border: 0; background: #2aa3ea; }
.chat b { position: absolute; right: 3px; top: 3px; width: 8px; height: 8px; border-radius: 50%; background: #d01c2b; color: #fff; font-size: 6px; line-height: 8px; }
.status { position: absolute; left: 0; bottom: 0; height: 11px; padding: 0 2px; background: #dcdfe2; color: #555; font: 6px/11px Inter, sans-serif; white-space: nowrap; }

.desktop { flex: none; height: 14px; padding: 2px 22px 0; }
.dock { display: flex; gap: 7px; height: 30px; padding: 4px 5px 0; border-radius: 8px 8px 0 0; background: linear-gradient(90deg, #6a3fa5, #7444b8 35%, #9136d2 65%, #7a2fc8); }
.dock svg { width: 20px; height: 20px; overflow: visible; }
.dock hr { width: 1px; height: 20px; margin: 0 3px 0 2px; border: 0; background: #b98ae0; }
.mark { position: absolute; right: 18px; bottom: -9px; color: #f3e6fb; font: italic 700 21px/24px "DejaVu Sans", sans-serif; }
```
